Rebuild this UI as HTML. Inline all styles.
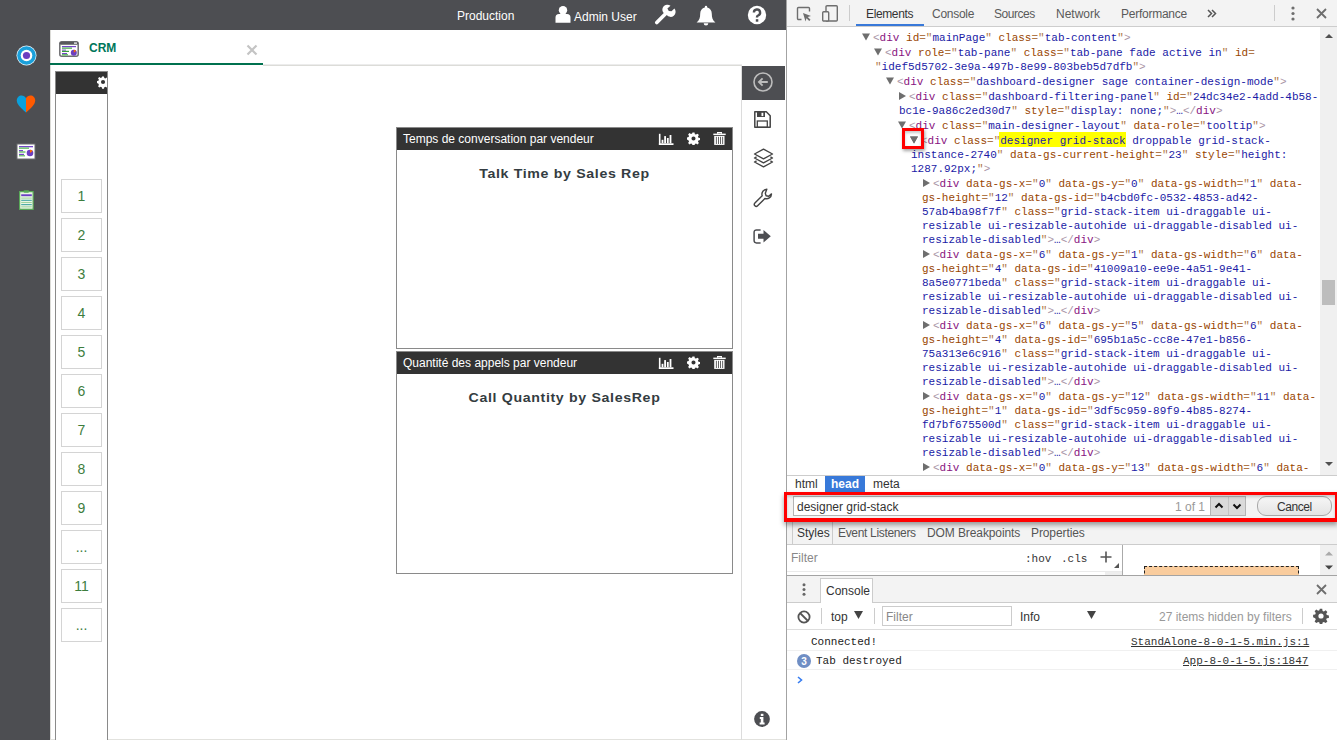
<!DOCTYPE html>
<html><head><meta charset="utf-8">
<style>
*{box-sizing:border-box;margin:0;padding:0}
html,body{width:1337px;height:740px;overflow:hidden;background:#fff;font-family:"Liberation Sans",sans-serif;position:relative}
.a{position:absolute}
.t{position:absolute;white-space:pre;line-height:1}
#topbar{left:0;top:0;width:786px;height:30px;background:#4d4e52}
#sidebar{left:0;top:30px;width:50px;height:710px;background:#4d4e52}
.numbox{position:absolute;left:61px;width:41px;height:34px;border:1px solid #d4d4d4;color:#3d7d3d;font-size:14px;text-align:center;line-height:32px}
.widget{position:absolute;left:396px;width:337px;border:1px solid #8a8a8a;background:#fff}
.whead{position:absolute;left:0;top:0;right:0;height:22px;background:#333}
.wtitle{position:absolute;left:0;width:335px;text-align:center;font-weight:700;font-size:13px;letter-spacing:0.6px;color:#343c41;transform:scaleX(1.09);white-space:pre}
/* devtools */
#dt{left:786px;top:0;width:551px;height:740px;background:#fff;border-left:1px solid #a3a3a3}
.code{font-family:"Liberation Mono",monospace;font-size:11px}
.ln{position:absolute;white-space:pre;line-height:14px;font-family:"Liberation Mono",monospace;font-size:11px;color:#1a1aa6}
.tg{color:#881280}.br{color:#a894a6}.an{color:#994500}.eq{color:#b0784a}.av{color:#1a1aa6}
.tri{color:#6e6e6e}
.ui{font-family:"Liberation Sans",sans-serif;font-size:12px;color:#333}
</style></head><body>
<div id="topbar" class="a"></div>
<div id="sidebar" class="a"></div>
<div class="a" style="left:50px;top:30px;width:1px;height:710px;background:#dcdcd8"></div>
<div class="a" style="left:50px;top:739px;width:736px;height:1px;background:#e2e2de"></div>


<!-- top bar icons -->
<svg class="a" style="left:555px;top:5px" width="16" height="18" viewBox="0 0 16 18"><circle cx="8" cy="5.3" r="4.2" fill="#fff"/><path d="M0.5 17.7V12.5a3.5 3.5 0 0 1 3.5-3.5h8a3.5 3.5 0 0 1 3.5 3.5v5.2z" fill="#fff"/></svg>
<svg class="a" style="left:654px;top:4px" width="22" height="21" viewBox="0 0 22 21"><path d="M2.8 18.6L12.3 9.1" stroke="#fff" stroke-width="3.6" stroke-linecap="round"/><path d="M10.2 9.6a5 5 0 0 1 6.3-7.8l-3.1 2.6 1.4 2.6 2.7 0.3 2.9-2.7a5 5 0 0 1-7.7 6.5z" fill="#fff"/></svg>
<svg class="a" style="left:696px;top:5px" width="20" height="21" viewBox="0 0 20 21"><path d="M10 0.8a1.2 1.2 0 0 1 1.2 1.2v0.6c2.9 0.6 4.6 3.1 4.6 6.2 0 4.2 0.8 6.3 3.6 8.6H0.6c2.8-2.3 3.6-4.4 3.6-8.6 0-3.1 1.7-5.6 4.6-6.2V2a1.2 1.2 0 0 1 1.2-1.2z" fill="#fff"/><path d="M7.7 18.2a2.3 2.3 0 0 0 4.6 0z" fill="#fff"/></svg>
<svg class="a" style="left:747px;top:5px" width="20" height="20" viewBox="0 0 20 20"><circle cx="10" cy="10" r="9.2" fill="#fff"/><path d="M6.9 7.6a3.1 3.1 0 1 1 4.2 2.9c-0.7 0.3-1.1 0.8-1.1 1.5v0.6" fill="none" stroke="#4d4e52" stroke-width="2.4"/><rect x="8.8" y="14.2" width="2.5" height="2.5" fill="#4d4e52"/></svg>

<!-- sidebar icons -->
<svg class="a" style="left:16px;top:45px" width="21" height="21" viewBox="0 0 21 21"><circle cx="10.5" cy="10.5" r="10" fill="#e8f4fb"/><circle cx="10.5" cy="10.5" r="9.3" fill="#1aa0db"/><circle cx="10.5" cy="10.5" r="5.8" fill="#fff"/><circle cx="10.5" cy="10.5" r="3.6" fill="#6c3fc0"/></svg>
<svg class="a" style="left:16px;top:95px" width="20" height="18" viewBox="0 0 20 18"><path d="M10 3.2C9 1.4 7.5 0.5 5.6 0.5 2.8 0.5 0.8 2.6 0.8 5.6c0 3.6 3.4 7 9.2 11.9z" fill="#0aa0dc"/><path d="M10 3.2C11 1.4 12.5 0.5 14.4 0.5c2.8 0 4.8 2.1 4.8 5.1 0 3.6-3.4 7-9.2 11.9z" fill="#ff5a00"/></svg>
<svg class="a" style="left:16px;top:143px" width="20" height="17" viewBox="0 0 20 17"><rect x="0.5" y="0.5" width="19" height="16" fill="#6a6b6e"/><rect x="1.5" y="1.5" width="17" height="14" fill="#fff"/><rect x="3" y="3" width="14" height="1.3" fill="#7446c9"/><rect x="3" y="4.5" width="10" height="1.3" fill="#5cb85c"/><rect x="3" y="7" width="4" height="1.2" fill="#7446c9"/><rect x="3" y="8.4" width="6.5" height="1.2" fill="#4caf50"/><rect x="3" y="10.8" width="5" height="1.2" fill="#7446c9"/><rect x="3" y="12.2" width="6" height="1.2" fill="#5cb85c"/><circle cx="14" cy="10" r="3.3" fill="#6c3fc0"/><path d="M14 10V6.7a3.3 3.3 0 0 1 2.6 1.3z" fill="#ff6a00"/></svg>
<svg class="a" style="left:19px;top:190px" width="15" height="20" viewBox="0 0 17 21" preserveAspectRatio="none"><rect x="0.7" y="1.7" width="15.3" height="18.6" fill="#e9f5e4" stroke="#58a958" stroke-width="1.3"/><rect x="5" y="0.3" width="6.5" height="2.5" rx="1.2" fill="#58a958"/><rect x="2.5" y="4.5" width="12" height="2" fill="#6a3fc4"/><rect x="2.5" y="8" width="12" height="1" fill="#9ad09a"/><rect x="2.5" y="10.3" width="12" height="1" fill="#2e9a9a"/><rect x="2.5" y="12.6" width="12" height="1" fill="#9ad09a"/><rect x="2.5" y="14.9" width="12" height="1" fill="#2e9a9a"/><rect x="2.5" y="17.2" width="12" height="1" fill="#9ad09a"/></svg>

<!-- CRM tab icon & close -->
<svg class="a" style="left:59px;top:41px" width="20" height="16" viewBox="0 0 20 16"><rect x="0.8" y="0.8" width="18.4" height="14.4" rx="2" fill="#fff" stroke="#6f6f72" stroke-width="1.5"/><rect x="0.8" y="0.8" width="18.4" height="3" rx="1.5" fill="#58595c"/><rect x="15" y="1.5" width="3" height="1.2" fill="#fff"/><rect x="3" y="5" width="14" height="1.2" fill="#7446c9"/><rect x="3" y="6.4" width="10" height="1.5" fill="#66bb6a"/><rect x="3" y="8.6" width="4" height="1" fill="#7446c9"/><rect x="3" y="9.8" width="7" height="1.2" fill="#3a9c3a"/><rect x="3" y="12" width="5" height="1" fill="#7446c9"/><rect x="3" y="13" width="6" height="1.5" fill="#66bb6a"/><circle cx="14.8" cy="11.8" r="3" fill="#6c3fc0"/><path d="M14.8 11.8V8.8a3 3 0 0 1 2.3 1.1z" fill="#ff6a00"/></svg>
<svg class="a" style="left:246px;top:44px" width="12" height="12"><path d="M1.5 1.5L10.5 10.5M10.5 1.5L1.5 10.5" stroke="#c4c4c4" stroke-width="2.2"/></svg>



<!-- top bar text -->
<div class="t" style="left:457px;top:10px;font-size:12px;color:#fff">Production</div>
<div class="t" style="left:574px;top:11px;font-size:12px;color:#fff">Admin User</div>

<!-- tab -->
<div class="t" style="left:89px;top:42px;font-size:12px;font-weight:700;color:#00765a">CRM</div>
<div class="a" style="left:50px;top:63px;width:213px;height:2px;background:#00714f"></div>
<div class="a" style="left:263px;top:64px;width:479px;height:1px;background:#ececec"></div>
<div class="a" style="left:263px;top:65px;width:479px;height:1px;background:#dcdcd8"></div>

<!-- left panel -->
<div class="a" style="left:55px;top:71px;width:53px;height:680px;border:1px solid #8a8a8a;background:#fff"></div>
<div class="a" style="left:56px;top:72px;width:51px;height:22px;background:#333"></div>
<!-- left panel gear -->
<svg class="a" style="left:97px;top:76px;overflow:hidden" width="10" height="13" viewBox="0 0 10.8 14"><g transform="scale(0.93)"><path fill="#fff" d="M5.9 0.5h2.2l.4 1.8 1.2.5 1.6-1 1.5 1.5-1 1.6.5 1.2 1.8.4v2.2l-1.8.4-.5 1.2 1 1.6-1.5 1.5-1.6-1-1.2.5-.4 1.8H5.9l-.4-1.8-1.2-.5-1.6 1-1.5-1.5 1-1.6-.5-1.2L-.1 8.1V5.9l1.8-.4.5-1.2-1-1.6 1.5-1.5 1.6 1 1.2-.5zM7 4.6A2.4 2.4 0 1 0 7 9.4 2.4 2.4 0 1 0 7 4.6z" fill-rule="evenodd"/></g></svg>
<div class="numbox" style="top:179px">1</div>
<div class="numbox" style="top:218px">2</div>
<div class="numbox" style="top:257px">3</div>
<div class="numbox" style="top:296px">4</div>
<div class="numbox" style="top:335px">5</div>
<div class="numbox" style="top:374px">6</div>
<div class="numbox" style="top:413px">7</div>
<div class="numbox" style="top:452px">8</div>
<div class="numbox" style="top:491px">9</div>
<div class="numbox" style="top:530px">...</div>
<div class="numbox" style="top:569px">11</div>
<div class="numbox" style="top:608px">...</div>

<!-- widgets -->
<div class="widget" style="top:127px;height:222px">
  <div class="whead"></div>
  <div class="t" style="left:6px;top:5px;font-size:12px;color:#fff">Temps de conversation par vendeur</div>
  <div class="wtitle" style="top:38px">Talk Time by Sales Rep</div>
  <svg class="a" style="left:261px;top:5px" width="16" height="13" viewBox="0 0 16 13"><rect x="0.9" y="0.8" width="1.6" height="11.2" fill="#fff"/><rect x="0.9" y="10.3" width="14.6" height="1.7" fill="#fff"/><rect x="3.6" y="6.8" width="1.8" height="3.5" fill="#fff"/><rect x="6.2" y="3.1" width="1.8" height="7.2" fill="#fff"/><rect x="8.9" y="5" width="1.8" height="5.3" fill="#fff"/><rect x="11.6" y="2" width="1.8" height="8.3" fill="#fff"/></svg>
  <svg class="a" style="left:289.5px;top:4.4px" width="13" height="13" viewBox="0 0 14 14"><path fill="#fff" fill-rule="evenodd" d="M5.9 0.5h2.2l.4 1.8 1.2.5 1.6-1 1.5 1.5-1 1.6.5 1.2 1.8.4v2.2l-1.8.4-.5 1.2 1 1.6-1.5 1.5-1.6-1-1.2.5-.4 1.8H5.9l-.4-1.8-1.2-.5-1.6 1-1.5-1.5 1-1.6-.5-1.2L-.1 8.1V5.9l1.8-.4.5-1.2-1-1.6 1.5-1.5 1.6 1 1.2-.5zM7 4.8A2.2 2.2 0 1 0 7 9.2 2.2 2.2 0 1 0 7 4.8z"/></svg>
  <svg class="a" style="left:316px;top:4px" width="13" height="14" viewBox="0 0 13 14"><path d="M4.6 1.8V0.6h3.8v1.2" fill="none" stroke="#fff" stroke-width="1.2"/><rect x="0.3" y="1.6" width="12.4" height="1.5" fill="#fff"/><path d="M1.2 3.9h10.3v9H1.2z" fill="#fff"/><rect x="2.9" y="4.8" width="0.9" height="7.2" fill="#555"/><rect x="5" y="4.8" width="0.9" height="7.2" fill="#555"/><rect x="7.1" y="4.8" width="0.9" height="7.2" fill="#555"/><rect x="9.2" y="4.8" width="0.9" height="7.2" fill="#555"/></svg>

</div>
<div class="widget" style="top:351px;height:223px">
  <div class="whead"></div>
  <div class="t" style="left:6px;top:5px;font-size:12px;color:#fff">Quantité des appels par vendeur</div>
  <div class="wtitle" style="top:38px">Call Quantity by SalesRep</div>
  <svg class="a" style="left:261px;top:5px" width="16" height="13" viewBox="0 0 16 13"><rect x="0.9" y="0.8" width="1.6" height="11.2" fill="#fff"/><rect x="0.9" y="10.3" width="14.6" height="1.7" fill="#fff"/><rect x="3.6" y="6.8" width="1.8" height="3.5" fill="#fff"/><rect x="6.2" y="3.1" width="1.8" height="7.2" fill="#fff"/><rect x="8.9" y="5" width="1.8" height="5.3" fill="#fff"/><rect x="11.6" y="2" width="1.8" height="8.3" fill="#fff"/></svg>
  <svg class="a" style="left:289.5px;top:4.4px" width="13" height="13" viewBox="0 0 14 14"><path fill="#fff" fill-rule="evenodd" d="M5.9 0.5h2.2l.4 1.8 1.2.5 1.6-1 1.5 1.5-1 1.6.5 1.2 1.8.4v2.2l-1.8.4-.5 1.2 1 1.6-1.5 1.5-1.6-1-1.2.5-.4 1.8H5.9l-.4-1.8-1.2-.5-1.6 1-1.5-1.5 1-1.6-.5-1.2L-.1 8.1V5.9l1.8-.4.5-1.2-1-1.6 1.5-1.5 1.6 1 1.2-.5zM7 4.8A2.2 2.2 0 1 0 7 9.2 2.2 2.2 0 1 0 7 4.8z"/></svg>
  <svg class="a" style="left:316px;top:4px" width="13" height="14" viewBox="0 0 13 14"><path d="M4.6 1.8V0.6h3.8v1.2" fill="none" stroke="#fff" stroke-width="1.2"/><rect x="0.3" y="1.6" width="12.4" height="1.5" fill="#fff"/><path d="M1.2 3.9h10.3v9H1.2z" fill="#fff"/><rect x="2.9" y="4.8" width="0.9" height="7.2" fill="#555"/><rect x="5" y="4.8" width="0.9" height="7.2" fill="#555"/><rect x="7.1" y="4.8" width="0.9" height="7.2" fill="#555"/><rect x="9.2" y="4.8" width="0.9" height="7.2" fill="#555"/></svg>

</div>

<!-- right toolbar -->
<div class="a" style="left:741px;top:65px;width:1px;height:675px;background:#dcdcdc"></div>
<div class="a" style="left:742px;top:66px;width:43px;height:34px;background:#4d4e52"></div>

<svg class="a" style="left:752px;top:71px" width="22" height="22" viewBox="0 0 22 22"><circle cx="11" cy="11" r="9" fill="none" stroke="#bdbdbd" stroke-width="1.6"/><path d="M15.8 11H7.2M10.6 7.3L6.9 11l3.7 3.7" fill="none" stroke="#bdbdbd" stroke-width="1.8"/></svg>
<svg class="a" style="left:754px;top:111px" width="17" height="17" viewBox="0 0 17 17"><path d="M0.8 0.8h11.5l3.9 3.9v11.5H0.8z" fill="#fff" stroke="#444" stroke-width="1.5" stroke-linejoin="round"/><rect x="3" y="1" width="8" height="5" fill="#444"/><rect x="7.5" y="1.8" width="1.8" height="3.3" fill="#fff"/><rect x="3.3" y="10" width="10" height="6" fill="#fff" stroke="#444" stroke-width="1.3"/></svg>
<svg class="a" style="left:753px;top:148px" width="21" height="21" viewBox="0 0 21 21"><path d="M10.5 1.2L19.5 6 10.5 10.8 1.5 6z" fill="#fff" stroke="#444" stroke-width="1.4" stroke-linejoin="round"/><path d="M3.6 8.8L1.5 10l9 4.8 9-4.8-2.1-1.2" fill="none" stroke="#444" stroke-width="1.4" stroke-linejoin="round"/><path d="M3.6 12.8L1.5 14l9 4.8 9-4.8-2.1-1.2" fill="none" stroke="#444" stroke-width="1.4" stroke-linejoin="round"/></svg>
<svg class="a" style="left:753px;top:187px" width="22" height="22" viewBox="0 0 22 22"><path d="M13.8 2.2a5 5 0 0 0-4.6 6.6L1.9 16.1a1.9 1.9 0 0 0 2.7 2.7l7.3-7.3a5 5 0 0 0 6.6-4.6l-2.8 2.3-2.6-0.5-0.8-2.5z" fill="none" stroke="#444" stroke-width="1.4" stroke-linejoin="round"/></svg>
<svg class="a" style="left:753px;top:229px" width="19" height="15" viewBox="0 0 19 15"><path d="M7.6 0.9H3.4A2.3 2.3 0 0 0 1.1 3.2v8.4a2.3 2.3 0 0 0 2.3 2.3h4.2" fill="none" stroke="#4d4e52" stroke-width="1.5"/><path d="M5 4.8h5.5V1l7.3 6.3-7.3 6.3V9.8H5z" fill="#4d4e52"/></svg>
<svg class="a" style="left:754px;top:711px" width="16" height="16" viewBox="0 0 16 16"><circle cx="8" cy="8" r="7.9" fill="#4d4e52"/><rect x="6.8" y="2.8" width="2.6" height="2.2" fill="#fff"/><path d="M5.8 6h3.6v5.6h1.2v2H5.6v-2h1.2V8H5.8z" fill="#fff"/></svg>

<!-- DEVTOOLS -->
<div id="dt" class="a">
  <!-- DOM tree -->
  <div class="a" style="left:0;top:0;width:533px;height:475px;overflow:hidden">
    <div class="a" style="left:212px;top:132px;width:127px;height:15px;background:#ffff00"></div>
<div class="ln" style="left:86px;top:31px"><span class="br">&lt;</span><span class="tg">div</span><span class="tx"> </span><span class="an">id</span><span class="eq">="</span><span class="av">mainPage</span><span class="eq">"</span><span class="tx"> </span><span class="an">class</span><span class="eq">="</span><span class="av">tab-content</span><span class="eq">"</span><span class="br">&gt;</span></div>
<svg class="a" style="left:75px;top:33px" width="9" height="8"><polygon points="0,0.5 8,0.5 4,7.5" fill="#6e6e6e"/></svg>
<div class="ln" style="left:98px;top:46px"><span class="br">&lt;</span><span class="tg">div</span><span class="tx"> </span><span class="an">role</span><span class="eq">="</span><span class="av">tab-pane</span><span class="eq">"</span><span class="tx"> </span><span class="an">class</span><span class="eq">="</span><span class="av">tab-pane fade active in</span><span class="eq">"</span><span class="tx"> </span><span class="an">id</span><span class="eq">=</span></div>
<svg class="a" style="left:87px;top:48px" width="9" height="8"><polygon points="0,0.5 8,0.5 4,7.5" fill="#6e6e6e"/></svg>
<div class="ln" style="left:88px;top:60px"><span class="eq">"</span><span class="av">idef5d5702-3e9a-497b-8e99-803beb5d7dfb</span><span class="eq">"</span><span class="br">&gt;</span></div>
<div class="ln" style="left:110px;top:75px"><span class="br">&lt;</span><span class="tg">div</span><span class="tx"> </span><span class="an">class</span><span class="eq">="</span><span class="av">dashboard-designer sage container-design-mode</span><span class="eq">"</span><span class="br">&gt;</span></div>
<svg class="a" style="left:99px;top:77px" width="9" height="8"><polygon points="0,0.5 8,0.5 4,7.5" fill="#6e6e6e"/></svg>
<div class="ln" style="left:122px;top:90px"><span class="br">&lt;</span><span class="tg">div</span><span class="tx"> </span><span class="an">class</span><span class="eq">="</span><span class="av">dashboard-filtering-panel</span><span class="eq">"</span><span class="tx"> </span><span class="an">id</span><span class="eq">="</span><span class="av">24dc34e2-4add-4b58-</span></div>
<svg class="a" style="left:111px;top:92px" width="9" height="9"><polygon points="1,0 8,4 1,8" fill="#6e6e6e"/></svg>
<div class="ln" style="left:112px;top:104px"><span class="av">bc1e-9a86c2ed30d7</span><span class="eq">"</span><span class="tx"> </span><span class="an">style</span><span class="eq">="</span><span class="av">display: none;</span><span class="eq">"</span><span class="br">&gt;</span><span class="tx">…</span><span class="br">&lt;/</span><span class="tg">div</span><span class="br">&gt;</span></div>
<div class="ln" style="left:122px;top:119px"><span class="br">&lt;</span><span class="tg">div</span><span class="tx"> </span><span class="an">class</span><span class="eq">="</span><span class="av">main-designer-layout</span><span class="eq">"</span><span class="tx"> </span><span class="an">data-role</span><span class="eq">="</span><span class="av">tooltip</span><span class="eq">"</span><span class="br">&gt;</span></div>
<svg class="a" style="left:111px;top:121px" width="9" height="8"><polygon points="0,0.5 8,0.5 4,7.5" fill="#6e6e6e"/></svg>
<div class="ln" style="left:134px;top:134px"><span class="br">&lt;</span><span class="tg">div</span><span class="tx"> </span><span class="an">class</span><span class="eq">="</span><span class="av">designer grid-stack droppable grid-stack-</span></div>
<svg class="a" style="left:123px;top:136px" width="9" height="8"><polygon points="0,0.5 8,0.5 4,7.5" fill="#6e6e6e"/></svg>
<div class="ln" style="left:124px;top:148px"><span class="av">instance-2740</span><span class="eq">"</span><span class="tx"> </span><span class="an">data-gs-current-height</span><span class="eq">="</span><span class="av">23</span><span class="eq">"</span><span class="tx"> </span><span class="an">style</span><span class="eq">="</span><span class="av">height:</span></div>
<div class="ln" style="left:124px;top:162px"><span class="av">1287.92px;</span><span class="eq">"</span><span class="br">&gt;</span></div>
<div class="ln" style="left:146px;top:177px"><span class="br">&lt;</span><span class="tg">div</span><span class="tx"> </span><span class="an">data-gs-x</span><span class="eq">="</span><span class="av">0</span><span class="eq">"</span><span class="tx"> </span><span class="an">data-gs-y</span><span class="eq">="</span><span class="av">0</span><span class="eq">"</span><span class="tx"> </span><span class="an">data-gs-width</span><span class="eq">="</span><span class="av">1</span><span class="eq">"</span><span class="tx"> </span><span class="an">data-</span></div>
<svg class="a" style="left:135px;top:179px" width="9" height="9"><polygon points="1,0 8,4 1,8" fill="#6e6e6e"/></svg>
<div class="ln" style="left:135px;top:191px"><span class="an">gs-height</span><span class="eq">="</span><span class="av">12</span><span class="eq">"</span><span class="tx"> </span><span class="an">data-gs-id</span><span class="eq">="</span><span class="av">b4cbd0fc-0532-4853-ad42-</span></div>
<div class="ln" style="left:135px;top:205px"><span class="av">57ab4ba98f7f</span><span class="eq">"</span><span class="tx"> </span><span class="an">class</span><span class="eq">="</span><span class="av">grid-stack-item ui-draggable ui-</span></div>
<div class="ln" style="left:135px;top:219px"><span class="av">resizable ui-resizable-autohide ui-draggable-disabled ui-</span></div>
<div class="ln" style="left:135px;top:233px"><span class="av">resizable-disabled</span><span class="eq">"</span><span class="br">&gt;</span><span class="tx">…</span><span class="br">&lt;/</span><span class="tg">div</span><span class="br">&gt;</span></div>
<div class="ln" style="left:146px;top:248px"><span class="br">&lt;</span><span class="tg">div</span><span class="tx"> </span><span class="an">data-gs-x</span><span class="eq">="</span><span class="av">6</span><span class="eq">"</span><span class="tx"> </span><span class="an">data-gs-y</span><span class="eq">="</span><span class="av">1</span><span class="eq">"</span><span class="tx"> </span><span class="an">data-gs-width</span><span class="eq">="</span><span class="av">6</span><span class="eq">"</span><span class="tx"> </span><span class="an">data-</span></div>
<svg class="a" style="left:135px;top:250px" width="9" height="9"><polygon points="1,0 8,4 1,8" fill="#6e6e6e"/></svg>
<div class="ln" style="left:135px;top:262px"><span class="an">gs-height</span><span class="eq">="</span><span class="av">4</span><span class="eq">"</span><span class="tx"> </span><span class="an">data-gs-id</span><span class="eq">="</span><span class="av">41009a10-ee9e-4a51-9e41-</span></div>
<div class="ln" style="left:135px;top:276px"><span class="av">8a5e0771beda</span><span class="eq">"</span><span class="tx"> </span><span class="an">class</span><span class="eq">="</span><span class="av">grid-stack-item ui-draggable ui-</span></div>
<div class="ln" style="left:135px;top:290px"><span class="av">resizable ui-resizable-autohide ui-draggable-disabled ui-</span></div>
<div class="ln" style="left:135px;top:304px"><span class="av">resizable-disabled</span><span class="eq">"</span><span class="br">&gt;</span><span class="tx">…</span><span class="br">&lt;/</span><span class="tg">div</span><span class="br">&gt;</span></div>
<div class="ln" style="left:146px;top:319px"><span class="br">&lt;</span><span class="tg">div</span><span class="tx"> </span><span class="an">data-gs-x</span><span class="eq">="</span><span class="av">6</span><span class="eq">"</span><span class="tx"> </span><span class="an">data-gs-y</span><span class="eq">="</span><span class="av">5</span><span class="eq">"</span><span class="tx"> </span><span class="an">data-gs-width</span><span class="eq">="</span><span class="av">6</span><span class="eq">"</span><span class="tx"> </span><span class="an">data-</span></div>
<svg class="a" style="left:135px;top:321px" width="9" height="9"><polygon points="1,0 8,4 1,8" fill="#6e6e6e"/></svg>
<div class="ln" style="left:135px;top:333px"><span class="an">gs-height</span><span class="eq">="</span><span class="av">4</span><span class="eq">"</span><span class="tx"> </span><span class="an">data-gs-id</span><span class="eq">="</span><span class="av">695b1a5c-cc8e-47e1-b856-</span></div>
<div class="ln" style="left:135px;top:347px"><span class="av">75a313e6c916</span><span class="eq">"</span><span class="tx"> </span><span class="an">class</span><span class="eq">="</span><span class="av">grid-stack-item ui-draggable ui-</span></div>
<div class="ln" style="left:135px;top:361px"><span class="av">resizable ui-resizable-autohide ui-draggable-disabled ui-</span></div>
<div class="ln" style="left:135px;top:375px"><span class="av">resizable-disabled</span><span class="eq">"</span><span class="br">&gt;</span><span class="tx">…</span><span class="br">&lt;/</span><span class="tg">div</span><span class="br">&gt;</span></div>
<div class="ln" style="left:146px;top:390px"><span class="br">&lt;</span><span class="tg">div</span><span class="tx"> </span><span class="an">data-gs-x</span><span class="eq">="</span><span class="av">0</span><span class="eq">"</span><span class="tx"> </span><span class="an">data-gs-y</span><span class="eq">="</span><span class="av">12</span><span class="eq">"</span><span class="tx"> </span><span class="an">data-gs-width</span><span class="eq">="</span><span class="av">11</span><span class="eq">"</span><span class="tx"> </span><span class="an">data-</span></div>
<svg class="a" style="left:135px;top:392px" width="9" height="9"><polygon points="1,0 8,4 1,8" fill="#6e6e6e"/></svg>
<div class="ln" style="left:135px;top:404px"><span class="an">gs-height</span><span class="eq">="</span><span class="av">1</span><span class="eq">"</span><span class="tx"> </span><span class="an">data-gs-id</span><span class="eq">="</span><span class="av">3df5c959-89f9-4b85-8274-</span></div>
<div class="ln" style="left:135px;top:418px"><span class="av">fd7bf675500d</span><span class="eq">"</span><span class="tx"> </span><span class="an">class</span><span class="eq">="</span><span class="av">grid-stack-item ui-draggable ui-</span></div>
<div class="ln" style="left:135px;top:432px"><span class="av">resizable ui-resizable-autohide ui-draggable-disabled ui-</span></div>
<div class="ln" style="left:135px;top:446px"><span class="av">resizable-disabled</span><span class="eq">"</span><span class="br">&gt;</span><span class="tx">…</span><span class="br">&lt;/</span><span class="tg">div</span><span class="br">&gt;</span></div>
<div class="ln" style="left:146px;top:461px"><span class="br">&lt;</span><span class="tg">div</span><span class="tx"> </span><span class="an">data-gs-x</span><span class="eq">="</span><span class="av">0</span><span class="eq">"</span><span class="tx"> </span><span class="an">data-gs-y</span><span class="eq">="</span><span class="av">13</span><span class="eq">"</span><span class="tx"> </span><span class="an">data-gs-width</span><span class="eq">="</span><span class="av">6</span><span class="eq">"</span><span class="tx"> </span><span class="an">data-</span></div>
<svg class="a" style="left:135px;top:463px" width="9" height="9"><polygon points="1,0 8,4 1,8" fill="#6e6e6e"/></svg>
  </div>
  <!-- red box around triangle -->
  <div class="a" style="left:115px;top:128px;width:22px;height:21px;border:3px solid #f00;box-shadow:1px 2px 3px rgba(0,0,0,.35), inset 0 2px 3px rgba(0,0,0,.22)"></div>
  <svg class="a" style="left:123px;top:136px" width="9" height="8"><polygon points="0,0.5 8,0.5 4,7.5" fill="#6e6e6e"/></svg>
  <!-- dom scrollbar -->
  <div class="a" style="left:533px;top:27px;width:17px;height:448px;background:#f0f0f0"></div>
  <svg class="a" style="left:538px;top:33px" width="8" height="6"><polygon points="0,5 4,1 8,5" fill="#505050"/></svg>
  <svg class="a" style="left:538px;top:461px" width="8" height="6"><polygon points="0,1 8,1 4,5" fill="#505050"/></svg>
  <div class="a" style="left:535px;top:280px;width:13px;height:25px;background:#bdbdbd"></div>
  <!-- toolbar -->
  <div class="a" style="left:0;top:0;width:550px;height:27px;background:#f3f3f3;border-bottom:1px solid #cdcdcd"></div>
  <svg class="a" style="left:9px;top:6px" width="16" height="16" viewBox="0 0 16 16"><path d="M5.5 13.5H2.5a1 1 0 0 1-1-1V2.5a1 1 0 0 1 1-1h10a1 1 0 0 1 1 1v3" fill="none" stroke="#6e6e6e" stroke-width="1.4"/><path d="M7 7l8 3-3.2 1 2.7 2.7-1.3 1.3-2.7-2.7-1 3.2z" fill="#6e6e6e"/></svg>
  <svg class="a" style="left:35px;top:5px" width="18" height="17" viewBox="0 0 18 17"><rect x="4" y="0.7" width="11.3" height="15.3" rx="1" fill="none" stroke="#6e6e6e" stroke-width="1.4"/><rect x="0.7" y="6.7" width="6" height="9.3" rx="1" fill="#f3f3f3" stroke="#6e6e6e" stroke-width="1.4"/></svg>
  <div class="a" style="left:62px;top:5px;width:1px;height:16px;background:#ccc"></div>
  <div class="t ui" style="left:79px;top:8px;letter-spacing:-0.37px">Elements</div>
  <div class="t ui" style="left:145px;top:8px;color:#5a5a5a;letter-spacing:-0.28px">Console</div>
  <div class="t ui" style="left:207px;top:8px;color:#5a5a5a;letter-spacing:-0.45px">Sources</div>
  <div class="t ui" style="left:269px;top:8px;color:#5a5a5a">Network</div>
  <div class="t ui" style="left:334px;top:8px;color:#5a5a5a;letter-spacing:-0.25px">Performance</div>
  <svg class="a" style="left:420px;top:9px" width="10" height="9"><path d="M1 1l3.5 3.5L1 8M5 1l3.5 3.5L5 8" fill="none" stroke="#555" stroke-width="1.5"/></svg>
  <div class="a" style="left:69px;top:24px;width:68px;height:2px;background:#3879d9"></div>
  <div class="a" style="left:487px;top:5px;width:1px;height:16px;background:#ccc"></div>
  <svg class="a" style="left:504px;top:6px" width="4" height="15"><circle cx="2" cy="2" r="1.6" fill="#6e6e6e"/><circle cx="2" cy="7.5" r="1.6" fill="#6e6e6e"/><circle cx="2" cy="13" r="1.6" fill="#6e6e6e"/></svg>
  <svg class="a" style="left:529px;top:8px" width="11" height="11"><path d="M1 1L10 10M10 1L1 10" stroke="#6e6e6e" stroke-width="1.8"/></svg>

  <!-- breadcrumbs -->
  <div class="a" style="left:0;top:475px;width:550px;height:17px;background:#fff;border-top:1px solid #ccc"></div>
  <div class="t ui" style="left:8px;top:478px">html</div>
  <div class="a" style="left:38px;top:476px;width:40px;height:16px;background:#3879d9"></div>
  <div class="t ui" style="left:44px;top:478px;color:#fff;font-weight:700">head</div>
  <div class="t ui" style="left:86px;top:478px">meta</div>

  <!-- search bar -->
  <div class="a" style="left:0;top:492px;width:550px;height:30px;background:#f3f3f3"></div>
  <div class="a" style="left:6px;top:496px;width:418px;height:20px;background:#fff;border:1px solid #b4b4b4"></div>
  <div class="t ui" style="left:10px;top:501px;font-size:12px">designer grid-stack</div>
  <div class="t ui" style="left:388px;top:501px;color:#999">1 of 1</div>
  <div class="a" style="left:423px;top:496px;width:36px;height:20px;background:#dadada;border:1px solid #b4b4b4"></div>
  <div class="a" style="left:441px;top:497px;width:1px;height:18px;background:#c4c4c4"></div>
  <svg class="a" style="left:427px;top:501px" width="10" height="8"><path d="M1.5 6.5L5 3l3.5 3.5" fill="none" stroke="#111" stroke-width="2"/></svg>
  <svg class="a" style="left:445px;top:503px" width="10" height="8"><path d="M1.5 1.5L5 5l3.5-3.5" fill="none" stroke="#111" stroke-width="2"/></svg>
  <div class="a" style="left:470px;top:496px;width:75px;height:20px;border:1px solid #a8a8a8;border-radius:9px;background:linear-gradient(#f6f6f6,#e4e4e4)"></div>
  <div class="t ui" style="left:490px;top:501px;color:#333;letter-spacing:-0.45px">Cancel</div>
  <div class="a" style="z-index:5;left:-3px;top:492px;width:554px;height:30px;border:3px solid #f00;border-bottom-width:4px;box-shadow:0 3px 5px rgba(0,0,0,.38), inset 0 2px 3px rgba(0,0,0,.18)"></div>

  <!-- styles tabs -->
  <div class="a" style="left:0;top:522px;width:550px;height:23px;background:#f3f3f3;border-bottom:1px solid #ccc"></div>
  <div class="a" style="left:5px;top:522px;width:41px;height:22px;border:1px solid #ccc;border-top:none;border-bottom:none;background:#f3f3f3"></div>
  <div class="t ui" style="left:10px;top:527px;color:#333">Styles</div>
  <div class="t ui" style="left:51px;top:527px;color:#555;letter-spacing:-0.33px">Event Listeners</div>
  <div class="t ui" style="left:140px;top:527px;color:#555;letter-spacing:-0.1px">DOM Breakpoints</div>
  <div class="t ui" style="left:244px;top:527px;color:#555;letter-spacing:-0.1px">Properties</div>
  <!-- filter row -->
  <div class="a" style="left:0;top:545px;width:335px;height:30px;background:#fff"></div>
  <div class="t ui" style="left:4px;top:552px;color:#888">Filter</div>
  <div class="t code" style="left:238px;top:554px;color:#333">:hov</div>
  <div class="t code" style="left:274px;top:554px;color:#333">.cls</div>
  <svg class="a" style="left:313px;top:551px" width="12" height="12"><path d="M6 0.5V11.5M0.5 6H11.5" stroke="#555" stroke-width="1.6"/></svg>
  <svg class="a" style="left:327px;top:563px" width="5" height="5"><polygon points="5,0 5,5 0,5" fill="#555"/></svg>
  <div class="a" style="left:0;top:571px;width:335px;height:1px;background:#eaeaea"></div>
  <div class="a" style="left:318px;top:572px;width:17px;height:3px;background:#eee"></div>
  <div class="a" style="left:335px;top:545px;width:1px;height:30px;background:#aaa"></div>
  <div class="a" style="left:336px;top:545px;width:197px;height:30px;background:#fff"></div>
  <div class="a" style="left:357px;top:566px;width:155px;height:12px;background:#f9cc9d;border:1px dashed #222"></div>
  <div class="a" style="left:533px;top:545px;width:17px;height:30px;background:#f0f0f0"></div>
  <svg class="a" style="left:538px;top:551px" width="8" height="5"><polygon points="0,4.5 4,0.5 8,4.5" fill="#aaa"/></svg>
  <svg class="a" style="left:538px;top:565px" width="8" height="5"><polygon points="0,0.5 8,0.5 4,4.5" fill="#444"/></svg>

  <!-- drawer -->
  <div class="a" style="left:0;top:575px;width:550px;height:28px;background:#f3f3f3;border-top:1px solid #a3a3a3;border-bottom:1px solid #ccc"></div>
  <svg class="a" style="left:15px;top:583px" width="4" height="13"><circle cx="2" cy="1.7" r="1.5" fill="#666"/><circle cx="2" cy="6.5" r="1.5" fill="#666"/><circle cx="2" cy="11.3" r="1.5" fill="#666"/></svg>
  <div class="a" style="left:33px;top:578px;width:53px;height:25px;background:#fff;border:1px solid #ccc;border-bottom:none"></div>
  <div class="t ui" style="left:39px;top:585px">Console</div>
  <svg class="a" style="left:529px;top:584px" width="11" height="11"><path d="M1 1L10 10M10 1L1 10" stroke="#6e6e6e" stroke-width="1.8"/></svg>
  <!-- console toolbar -->
  <div class="a" style="left:0;top:603px;width:550px;height:27px;background:#fff;border-bottom:1px solid #ddd"></div>
  <svg class="a" style="left:10px;top:610px" width="14" height="14"><circle cx="7" cy="7" r="5.6" fill="none" stroke="#555" stroke-width="1.8"/><path d="M3 3L11 11" stroke="#555" stroke-width="1.8"/></svg>
  <div class="a" style="left:34px;top:608px;width:1px;height:16px;background:#ccc"></div>
  <div class="t ui" style="left:44px;top:611px">top</div>
  <svg class="a" style="left:67px;top:611px" width="9" height="8"><polygon points="0,0 9,0 4.5,8" fill="#444"/></svg>
  <div class="a" style="left:87px;top:608px;width:1px;height:16px;background:#ccc"></div>
  <div class="a" style="left:95px;top:606px;width:130px;height:20px;border:1px solid #ccc;background:#fff"></div>
  <div class="t ui" style="left:99px;top:611px;color:#888">Filter</div>
  <div class="t ui" style="left:233px;top:611px">Info</div>
  <svg class="a" style="left:300px;top:611px" width="9" height="8"><polygon points="0,0 9,0 4.5,8" fill="#444"/></svg>
  <div class="t ui" style="left:372px;top:611px;color:#999">27 items hidden by filters</div>
  <div class="a" style="left:515px;top:608px;width:1px;height:16px;background:#ccc"></div>
  <svg class="a" style="left:526px;top:608px" width="16" height="16" viewBox="0 0 16 16"><path fill="#555" d="M6.8 0.8h2.4l.4 2.1 1.3.6 1.8-1.2 1.7 1.7-1.2 1.8.6 1.3 2.1.4v2.4l-2.1.4-.6 1.3 1.2 1.8-1.7 1.7-1.8-1.2-1.3.6-.4 2.1H6.8l-.4-2.1-1.3-.6-1.8 1.2-1.7-1.7 1.2-1.8-.6-1.3L.1 9.2V6.8l2.1-.4.6-1.3-1.2-1.8 1.7-1.7 1.8 1.2 1.3-.6zM8 5.4A2.6 2.6 0 1 0 8 10.6 2.6 2.6 0 1 0 8 5.4z"/></svg>
  <!-- messages -->
  <div class="t code" style="left:24px;top:637px;color:#222">Connected!</div>
  <div class="t code" style="left:344px;top:637px;color:#333;text-decoration:underline">StandAlone-8-0-1-5.min.js:1</div>
  <div class="a" style="left:0;top:650px;width:550px;height:1px;background:#f0f0f0"></div>
  <svg class="a" style="left:10px;top:654px" width="14" height="14"><circle cx="7" cy="7" r="7" fill="#6f8ec4"/><text x="7" y="11" text-anchor="middle" font-family="Liberation Sans" font-size="10" font-weight="700" fill="#fff">3</text></svg>
  <div class="t code" style="left:29px;top:656px;color:#222">Tab destroyed</div>
  <div class="t code" style="left:396px;top:656px;color:#333;text-decoration:underline">App-8-0-1-5.js:1847</div>
  <div class="a" style="left:0;top:669px;width:550px;height:1px;background:#f0f0f0"></div>
  <svg class="a" style="left:10px;top:676px" width="6" height="8"><path d="M1 1L4.5 4L1 7" fill="none" stroke="#367cf1" stroke-width="1.6"/></svg>
</div>
</body></html>
